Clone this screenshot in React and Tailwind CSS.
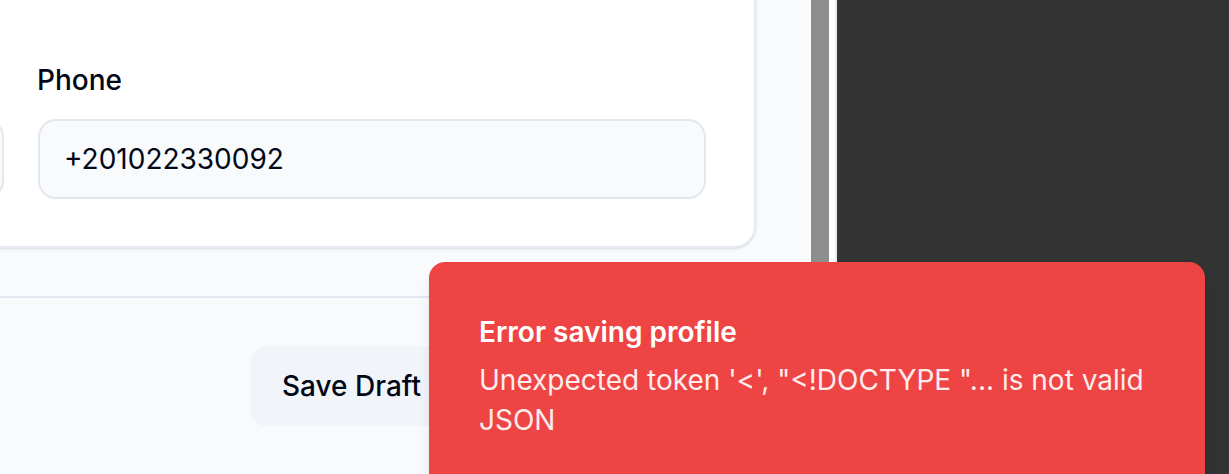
// App.jsx
// Profile editor (cropped) with an error toast on top.

export default function App() {
  return (
    <div
      className="relative flex h-[474px] w-full overflow-hidden bg-[#333333]"
      style={{ fontFamily: "Inter, 'Noto Sans', sans-serif" }}
    >
      {/* MAIN FORM AREA */}
      <div className="flex w-[804px] shrink-0 flex-col bg-[#f8fafc] pr-[48px]">
        {/* Card (its top and left run off the window) */}
        <div className="ml-[-714px] mt-[-40px] rounded-[22px] border-2 border-[#e6ebf2] bg-white px-[48px] pb-[47px] pt-[98px] shadow-sm">
          <div className="grid grid-cols-2 gap-[34px]">
            <div className="flex flex-col">
              <label className="text-[28px] font-medium leading-[40px] text-[#020817]">
                Email
              </label>
              <div className="mt-[19px] flex h-[80px] items-center rounded-[18px] border-2 border-[#e2e8f0] bg-[#f8fafc] px-[24px] text-[28px] text-[#020817]">
                mail@example.com
              </div>
            </div>
            <div className="flex flex-col">
              <label className="-ml-px text-[28px] font-medium leading-[40px] text-[#020817]">
                Phone
              </label>
              <div className="mt-[19px] flex h-[80px] items-center rounded-[18px] border-2 border-[#e2e8f0] bg-[#f8fafc] px-[24px] text-[28px] text-[#020817]">
                +201022330092
              </div>
            </div>
          </div>
        </div>

        {/* Footer with actions */}
        <div className="mt-[48px] mr-[-48px] border-t-2 border-[#e2e8f0] pt-[48px]">
          <div className="flex gap-[16px] pl-[250px]">
            <button className="flex h-[80px] w-[240px] shrink-0 items-center rounded-[16px] bg-[#f1f5f9] px-[32px] text-[28px] font-medium text-[#020817]">
              Save Draft
            </button>
            <button className="flex h-[80px] w-[260px] shrink-0 items-center rounded-[16px] bg-[#0f172a] px-[32px] text-[28px] font-medium text-white">
              Save Profile
            </button>
          </div>
        </div>
      </div>

      {/* Scrollbar strip */}
      <div className="flex w-[31px] shrink-0 bg-[#fbfbfb]">
        <div className="ml-[7px] w-[18px] bg-[#8e8e8e]" />
        <div className="w-[6px] bg-white" />
      </div>
      <div className="w-[2px] shrink-0 bg-[#e6ecf5]" />

      {/* Dark side panel */}
      <div className="flex-1 bg-[#333333]" />

      {/* ERROR TOAST */}
      <div className="absolute left-[429px] top-[262px] h-[260px] w-[776px] rounded-[16px] border-2 border-[#ef4444] bg-[#ef4444] pl-[48px] pr-[36px] pt-[48px] shadow-lg">
        <p className="text-[28px] font-semibold leading-[40px] text-white">
          Error saving profile
        </p>
        <p className="mt-[8px] text-[28px] leading-[40px] text-white opacity-90">
          Unexpected token '&lt;', "&lt;!DOCTYPE "... is not valid JSON
        </p>
      </div>
    </div>
  );
}
